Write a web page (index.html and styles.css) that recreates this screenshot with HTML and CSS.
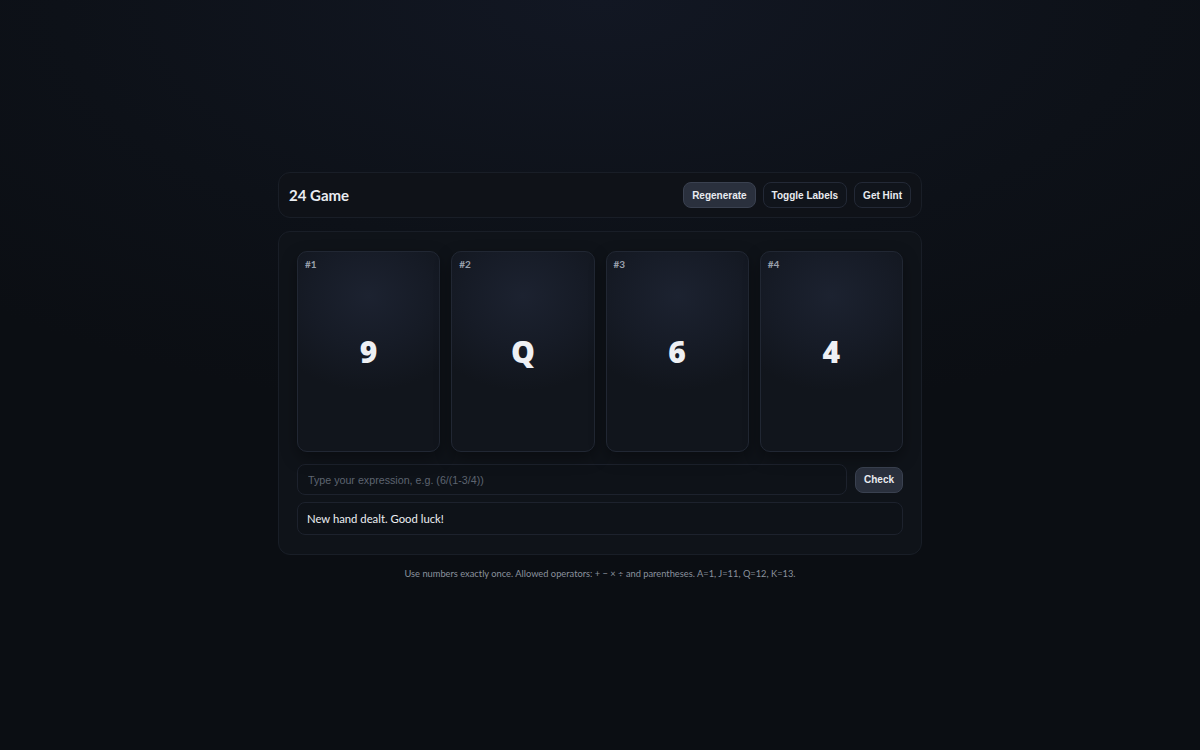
FILE: index.html
```html
<!DOCTYPE html>
<html lang="en">
<head>
<meta charset="utf-8">
<title>24 Game</title>
<link rel="stylesheet" href="styles.css">
</head>
<body>
<div class="app">
  <header class="topbar">
    <h1 class="title">24 Game</h1>
    <div class="actions">
      <button class="btn btn-active">Regenerate</button>
      <button class="btn">Toggle Labels</button>
      <button class="btn">Get Hint</button>
    </div>
  </header>
  <main class="board">
    <div class="cards">
      <div class="card"><span class="label">#1</span><span class="rank">9</span></div>
      <div class="card"><span class="label">#2</span><span class="rank">Q</span></div>
      <div class="card"><span class="label">#3</span><span class="rank">6</span></div>
      <div class="card"><span class="label">#4</span><span class="rank">4</span></div>
    </div>
    <div class="entry">
      <input class="expr" type="text" placeholder="Type your expression, e.g. (6/(1-3/4))">
      <button class="btn btn-active btn-check">Check</button>
    </div>
    <div class="status">New hand dealt. Good luck!</div>
  </main>
  <p class="rules">Use numbers exactly once. Allowed operators: + − × ÷ and parentheses. A=1, J=11, Q=12, K=13.</p>
</div>
</body>
</html>
```
FILE: styles.css
```css
* { box-sizing: border-box; }
html, body { height: 100%; }
body {
  margin: 0;
  background: radial-gradient(ellipse 900px 420px at 50% 0%, #121723 0%, #0d1118 60%, #0b0e13 100%);
  background-color: #0b0e13;
  font-family: Lato, "Open Sans", sans-serif;
  color: #e6e9ef;
}
.app {
  width: 644px;
  margin: 0 auto;
  padding-top: 172px;
}
.topbar {
  display: flex;
  align-items: center;
  justify-content: space-between;
  height: 46px;
  padding: 0 10px;
  background: #0f1218;
  border: 1px solid #191e27;
  border-radius: 12px;
}
.title {
  margin: 0;
  font-size: 15px;
  font-weight: 700;
  color: #e9ecf1;
}
.actions { display: flex; gap: 7px; }
.btn {
  height: 26px;
  padding: 0 8px;
  font-family: "Liberation Sans", Arial, sans-serif;
  font-size: 10px;
  font-weight: 700;
  color: #e8ebf0;
  background: #10141b;
  border: 1px solid #232936;
  border-radius: 8px;
}
.btn-active {
  background: #2a303d;
  border-color: #3a4150;
}
.board {
  margin-top: 13px;
  padding: 19px 18px 19px 18px;
  background: #0f1319;
  border: 1px solid #191e27;
  border-radius: 12px;
}
.cards {
  display: grid;
  grid-template-columns: repeat(4, 1fr);
  gap: 11px;
}
.card {
  position: relative;
  height: 201px;
  display: flex;
  align-items: center;
  justify-content: center;
  background: radial-gradient(ellipse 110px 95px at 50% 22%, #1c2230 0%, #161b26 55%, #11151c 100%);
  border: 1px solid #212733;
  border-radius: 10px;
  box-shadow: 0 6px 16px rgba(0,0,0,0.35);
}
.label {
  position: absolute;
  top: 6px;
  left: 7px;
  font-size: 10px;
  font-weight: 700;
  color: #9aa1ad;
}
.rank {
  font-family: "Open Sans", Lato, sans-serif;
  font-size: 30px;
  font-weight: 800;
  color: #eef0f4;
}
.entry {
  display: flex;
  align-items: center;
  gap: 8px;
  margin-top: 12px;
}
.expr {
  flex: 1;
  height: 31px;
  padding: 0 10px;
  font-family: "Liberation Sans", Arial, sans-serif;
  font-size: 10.7px;
  color: #e6e9ef;
  background: #0e1218;
  border: 1px solid #1d222d;
  border-radius: 8px;
  outline: none;
}
.expr::placeholder { color: #5d6470; }
.btn-check { height: 26px; padding: 0 8px; }
.status {
  margin-top: 7px;
  height: 33px;
  display: flex;
  align-items: center;
  padding: 0 9px;
  font-size: 11.3px;
  color: #eceef2;
  background: #0e1218;
  border: 1px solid #1d222d;
  border-radius: 8px;
}
.rules {
  margin: 13px 0 0;
  text-align: center;
  font-size: 9.3px;
  color: #8a919d;
}
```
